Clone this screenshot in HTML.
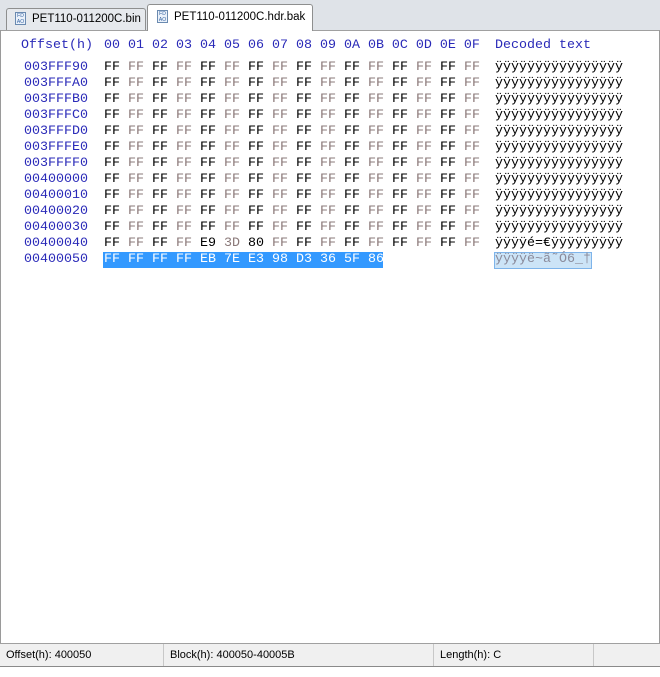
<!DOCTYPE html>
<html><head><meta charset="utf-8"><style>
body{margin:0;width:660px;height:677px;overflow:hidden;background:#fff;font-family:"Liberation Sans",sans-serif;position:relative}
.tabbar{position:absolute;left:0;top:0;width:660px;height:30px;background:#dfe3e8;border-bottom:1px solid #a0a0a0}
.tab{position:absolute;font-size:11.5px;color:#000;box-sizing:border-box;border:1px solid #8e8f8f;border-bottom:none;border-radius:3px 3px 0 0;white-space:nowrap;overflow:hidden}
.ic{display:inline-block;width:11px;height:13px;border:1px solid #6a8ab0;background:#eaf1fa;vertical-align:middle;margin-right:6px;font-size:5px;line-height:6px;color:#3060a0;text-align:center;box-sizing:border-box}
.mono{font-family:"Liberation Mono",monospace;font-size:13.33px;white-space:pre;position:absolute;line-height:16px}
.o{color:#2a2ab8}
.b{color:#000}
.g{color:#8a7878}
.frame{position:absolute;left:0;top:30px;width:658px;height:613px;border-left:1px solid #9a9a9a;border-right:1px solid #9a9a9a}
.status{position:absolute;left:0;top:643px;width:660px;height:22px;background:#f0f0f0;border-top:1px solid #a0a0a0;border-bottom:1px solid #8a8a8a;font-size:11px}
.status div{position:absolute;top:0;height:22px;line-height:22px;border-right:1px solid #c8c8c8;padding-left:6px;box-sizing:border-box}
</style></head><body>
<div class="tabbar">
<div class="tab" style="left:6px;top:8px;width:140px;height:22px;background:#e6e9ed;line-height:20px;padding-left:8px">
<span class="ic">FD<br>AO</span>PET110-011200C.bin</div>
<div class="tab" style="left:147px;top:4px;width:166px;height:27px;background:#fff;line-height:24px;padding-left:9px">
<span class="ic">FD<br>AO</span>PET110-011200C.hdr.bak</div>
</div>
<div class="frame"></div>
<div class="mono o" style="left:21px;top:38px">Offset(h)</div>
<div class="mono o" style="left:104px;top:38px">00 01 02 03 04 05 06 07 08 09 0A 0B 0C 0D 0E 0F</div>
<div class="mono o" style="left:495px;top:38px">Decoded text</div>

<div class="mono o" style="left:24px;top:60px">003FFF90
003FFFA0
003FFFB0
003FFFC0
003FFFD0
003FFFE0
003FFFF0
00400000
00400010
00400020
00400030
00400040
00400050</div>

<div class="mono" style="left:104px;top:60px"><span class="b">FF</span> <span class="g">FF</span> <span class="b">FF</span> <span class="g">FF</span> <span class="b">FF</span> <span class="g">FF</span> <span class="b">FF</span> <span class="g">FF</span> <span class="b">FF</span> <span class="g">FF</span> <span class="b">FF</span> <span class="g">FF</span> <span class="b">FF</span> <span class="g">FF</span> <span class="b">FF</span> <span class="g">FF</span>
<span class="b">FF</span> <span class="g">FF</span> <span class="b">FF</span> <span class="g">FF</span> <span class="b">FF</span> <span class="g">FF</span> <span class="b">FF</span> <span class="g">FF</span> <span class="b">FF</span> <span class="g">FF</span> <span class="b">FF</span> <span class="g">FF</span> <span class="b">FF</span> <span class="g">FF</span> <span class="b">FF</span> <span class="g">FF</span>
<span class="b">FF</span> <span class="g">FF</span> <span class="b">FF</span> <span class="g">FF</span> <span class="b">FF</span> <span class="g">FF</span> <span class="b">FF</span> <span class="g">FF</span> <span class="b">FF</span> <span class="g">FF</span> <span class="b">FF</span> <span class="g">FF</span> <span class="b">FF</span> <span class="g">FF</span> <span class="b">FF</span> <span class="g">FF</span>
<span class="b">FF</span> <span class="g">FF</span> <span class="b">FF</span> <span class="g">FF</span> <span class="b">FF</span> <span class="g">FF</span> <span class="b">FF</span> <span class="g">FF</span> <span class="b">FF</span> <span class="g">FF</span> <span class="b">FF</span> <span class="g">FF</span> <span class="b">FF</span> <span class="g">FF</span> <span class="b">FF</span> <span class="g">FF</span>
<span class="b">FF</span> <span class="g">FF</span> <span class="b">FF</span> <span class="g">FF</span> <span class="b">FF</span> <span class="g">FF</span> <span class="b">FF</span> <span class="g">FF</span> <span class="b">FF</span> <span class="g">FF</span> <span class="b">FF</span> <span class="g">FF</span> <span class="b">FF</span> <span class="g">FF</span> <span class="b">FF</span> <span class="g">FF</span>
<span class="b">FF</span> <span class="g">FF</span> <span class="b">FF</span> <span class="g">FF</span> <span class="b">FF</span> <span class="g">FF</span> <span class="b">FF</span> <span class="g">FF</span> <span class="b">FF</span> <span class="g">FF</span> <span class="b">FF</span> <span class="g">FF</span> <span class="b">FF</span> <span class="g">FF</span> <span class="b">FF</span> <span class="g">FF</span>
<span class="b">FF</span> <span class="g">FF</span> <span class="b">FF</span> <span class="g">FF</span> <span class="b">FF</span> <span class="g">FF</span> <span class="b">FF</span> <span class="g">FF</span> <span class="b">FF</span> <span class="g">FF</span> <span class="b">FF</span> <span class="g">FF</span> <span class="b">FF</span> <span class="g">FF</span> <span class="b">FF</span> <span class="g">FF</span>
<span class="b">FF</span> <span class="g">FF</span> <span class="b">FF</span> <span class="g">FF</span> <span class="b">FF</span> <span class="g">FF</span> <span class="b">FF</span> <span class="g">FF</span> <span class="b">FF</span> <span class="g">FF</span> <span class="b">FF</span> <span class="g">FF</span> <span class="b">FF</span> <span class="g">FF</span> <span class="b">FF</span> <span class="g">FF</span>
<span class="b">FF</span> <span class="g">FF</span> <span class="b">FF</span> <span class="g">FF</span> <span class="b">FF</span> <span class="g">FF</span> <span class="b">FF</span> <span class="g">FF</span> <span class="b">FF</span> <span class="g">FF</span> <span class="b">FF</span> <span class="g">FF</span> <span class="b">FF</span> <span class="g">FF</span> <span class="b">FF</span> <span class="g">FF</span>
<span class="b">FF</span> <span class="g">FF</span> <span class="b">FF</span> <span class="g">FF</span> <span class="b">FF</span> <span class="g">FF</span> <span class="b">FF</span> <span class="g">FF</span> <span class="b">FF</span> <span class="g">FF</span> <span class="b">FF</span> <span class="g">FF</span> <span class="b">FF</span> <span class="g">FF</span> <span class="b">FF</span> <span class="g">FF</span>
<span class="b">FF</span> <span class="g">FF</span> <span class="b">FF</span> <span class="g">FF</span> <span class="b">FF</span> <span class="g">FF</span> <span class="b">FF</span> <span class="g">FF</span> <span class="b">FF</span> <span class="g">FF</span> <span class="b">FF</span> <span class="g">FF</span> <span class="b">FF</span> <span class="g">FF</span> <span class="b">FF</span> <span class="g">FF</span>
<span class="b">FF</span> <span class="g">FF</span> <span class="b">FF</span> <span class="g">FF</span> <span class="b">E9</span> <span class="g">3D</span> <span class="b">80</span> <span class="g">FF</span> <span class="b">FF</span> <span class="g">FF</span> <span class="b">FF</span> <span class="g">FF</span> <span class="b">FF</span> <span class="g">FF</span> <span class="b">FF</span> <span class="g">FF</span></div>

<div style="position:absolute;left:103px;top:252px;width:280px;height:16px;background:#3399ff"></div>
<div class="mono" style="left:104px;top:252px;color:#fff">FF FF FF FF EB 7E E3 98 D3 36 5F 86</div>

<div class="mono b" style="left:495px;top:60px">ÿÿÿÿÿÿÿÿÿÿÿÿÿÿÿÿ
ÿÿÿÿÿÿÿÿÿÿÿÿÿÿÿÿ
ÿÿÿÿÿÿÿÿÿÿÿÿÿÿÿÿ
ÿÿÿÿÿÿÿÿÿÿÿÿÿÿÿÿ
ÿÿÿÿÿÿÿÿÿÿÿÿÿÿÿÿ
ÿÿÿÿÿÿÿÿÿÿÿÿÿÿÿÿ
ÿÿÿÿÿÿÿÿÿÿÿÿÿÿÿÿ
ÿÿÿÿÿÿÿÿÿÿÿÿÿÿÿÿ
ÿÿÿÿÿÿÿÿÿÿÿÿÿÿÿÿ
ÿÿÿÿÿÿÿÿÿÿÿÿÿÿÿÿ
ÿÿÿÿÿÿÿÿÿÿÿÿÿÿÿÿ
ÿÿÿÿé=€ÿÿÿÿÿÿÿÿÿ</div>
<div style="position:absolute;left:494px;top:252px;width:96px;height:15px;background:#cce4f7;border:1px solid #7eb4ea"></div>
<div class="mono" style="left:495px;top:252px;color:#8a8a9a">ÿÿÿÿë~ã˜Ó6_†</div>

<div class="status">
<div style="left:0;width:164px">Offset(h): 400050</div>
<div style="left:164px;width:270px">Block(h): 400050-40005B</div>
<div style="left:434px;width:160px">Length(h): C</div>
</div>
</body></html>
